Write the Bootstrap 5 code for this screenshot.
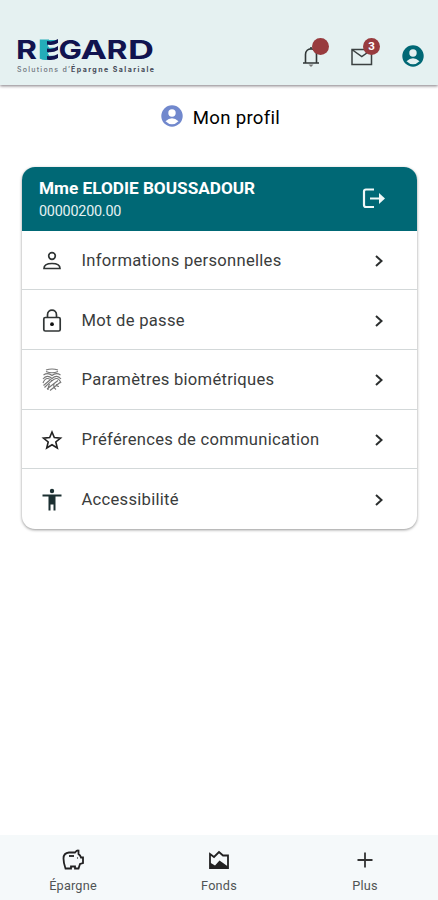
<!DOCTYPE html>
<html lang="fr">
<head>
<meta charset="utf-8">
<meta name="viewport" content="width=device-width, initial-scale=1">
<title>Mon profil</title>
<link href="https://cdn.jsdelivr.net/npm/bootstrap@5.3.0/dist/css/bootstrap.min.css" rel="stylesheet">
<style>
body{font-family:Roboto,"Liberation Sans",sans-serif;color:#111;background:#fff;height:900px;overflow:hidden}
svg{display:block;flex:none}
.topbar{height:85px;background:#e5f1f1;box-shadow:0 1px 3px rgba(60,50,60,.65);padding:32px 13px 0 17px}
.brand text{font-family:Inter,sans-serif}
.tools{margin-top:12px;gap:27px}
.count{position:absolute;left:13px;top:-6px;width:17px;height:17px;border-radius:50%;background:#983b3e;color:#fff;font-size:11.5px;font-weight:700;line-height:17px;text-align:center}
.page-title{height:82px;padding-top:19px;gap:9px;padding-left:2px}
.page-title h1{font-size:18.6px;line-height:27px;padding-top:1px;letter-spacing:.3px;font-weight:400;color:#000}
.profile{margin:0 21px 0 22px;border:0;border-radius:13px;overflow:hidden;box-shadow:0 1px 3px rgba(0,0,0,.42)}
.profile-head{height:63.5px;background:#006875;color:#fff;padding:10px 30px 0 17px}
.holder{font-size:17.2px;line-height:22px;font-weight:700}
.account{font-size:14.4px;line-height:20px;letter-spacing:-.23px;padding-top:3px;color:#e5f1f2}
.entry{height:59.7px;padding:2px 29px 0 17px;border-bottom:1.5px solid #d3d8d9;color:#3a3c3c;font-size:16.6px;text-decoration:none}
.entry:last-child{border-bottom:0}
.entry span{margin-left:16.5px;padding-top:1px;letter-spacing:.27px}
.bottombar{height:65px;background:#f5f9fa;padding-top:13px}
.bottombar a{color:#505454;text-decoration:none;font-size:12.7px;line-height:16px;letter-spacing:.2px;gap:6px}
</style>
</head>
<body class="d-flex flex-column">
<header class="topbar d-flex justify-content-between flex-shrink-0">
  <svg class="brand" width="140" height="44" viewBox="0 0 140 44" aria-label="REGARD">
    <g font-size="26" font-weight="700" fill="#11134f">
      <text x="-1" y="26.500" textLength="21" lengthAdjust="spacingAndGlyphs">R</text>
      <text x="21" y="26.500" textLength="20" lengthAdjust="spacingAndGlyphs" fill="#24adb9">E</text>
      <text x="41.500" y="26.500" textLength="23.500" lengthAdjust="spacingAndGlyphs">G</text>
      <text x="63.500" y="26.500" textLength="26.500" lengthAdjust="spacingAndGlyphs">A</text>
      <text x="89.500" y="26.500" textLength="21" lengthAdjust="spacingAndGlyphs">R</text>
      <text x="111" y="26.500" textLength="26" lengthAdjust="spacingAndGlyphs">D</text>
    </g>
    <path d="M22.800 7.600H32V27.500Q27 29 22.800 26.500Z" fill="#24adb9"/>
    <path d="M30 9Q36 10.500 41 7V11Q36 14 30 12.500ZM30 16.500Q36 18 41 14V18Q36 21 30 20ZM30 24Q36 25 41 22V26Q36 29 30 27.500Z" fill="#11134f"/>
    <path d="M31 13.600Q37 15 42 12M31 21.500Q37 23 42 19.500" stroke="#e5f1f1" stroke-width="1.800" fill="none"/>
    <g font-size="7">
      <text x="0" y="39.500" textLength="53" fill="#6d747d" font-weight="500">Solutions d’</text>
      <text x="54" y="39.500" textLength="83" fill="#454a58" font-weight="700">Épargne Salariale</text>
    </g>
  </svg>
  <div class="tools d-flex align-items-start">
    <div class="position-relative">
      <svg width="24" height="24" viewBox="0 0 24 24" fill="none" stroke="#303737" stroke-width="1.600"><path d="M4 19H20M6.500 19V10.500C6.500 3 17.500 3 17.500 10.500V19M12 5V3"/><path d="M9.500 20.500h5l-2.500 2.500z" fill="#777" stroke="none"/></svg>
      <span class="count"></span>
    </div>
    <div class="position-relative">
      <svg width="24" height="24" viewBox="0 0 24 24" fill="none" stroke="#3b4141" stroke-width="1.500"><path d="M2 5.500H21.500V20.500H2ZM2.500 6L11.800 12.500L21 6"/></svg>
      <span class="count">3</span>
    </div>
    <svg width="24" height="24" viewBox="0 0 24 24"><circle cx="12" cy="12" r="10.700" fill="#006875"/><circle cx="12" cy="9" r="3.700" fill="#e5f1f1"/><path d="M5.500 17.200Q12 11.500 18.500 17.200Q12 23.500 5.500 17.200Z" fill="#e5f1f1"/></svg>
  </div>
</header>
<div class="page-title d-flex justify-content-center align-items-start flex-shrink-0">
  <svg width="24" height="24" viewBox="0 0 24 24"><circle cx="12" cy="12" r="10.700" fill="#7188cd"/><circle cx="12" cy="9" r="3.700" fill="#fff"/><path d="M5.500 17.200Q12 11.500 18.500 17.200Q12 23.500 5.500 17.200Z" fill="#fff"/></svg>
  <h1 class="m-0">Mon profil</h1>
</div>
<main class="flex-grow-1">
  <section class="card profile">
    <div class="profile-head d-flex justify-content-between">
      <div><div class="holder">Mme ELODIE BOUSSADOUR</div><div class="account">00000200.00</div></div>
      <svg class="mt-2" width="26" height="26" viewBox="0 0 26 26" fill="none" stroke="#f0f8f8" stroke-width="2.200"><path d="M13 4.500H5Q3 4.500 3 6.500V20Q3 22 5 22H13M9 13.500H22"/><path d="M18 8L24 13.500L18 19Z" fill="#f0f8f8" stroke="none"/></svg>
    </div>
    <a class="entry d-flex align-items-center" href="#">
      <svg width="26" height="26" viewBox="0 0 26 26" fill="none" stroke="#303535" stroke-width="1.700"><circle cx="13" cy="8" r="3.300"/><path d="M5 20.500Q5 15.500 13 15.500T21 20.500Z"/></svg>
      <span>Informations personnelles</span>
      <svg class="ms-auto" width="18" height="18" viewBox="0 0 18 18"><path d="M6 4L11.500 9L6 14" fill="none" stroke="#2b2e2e" stroke-width="2"/></svg>
    </a>
    <a class="entry d-flex align-items-center" href="#">
      <svg width="26" height="26" viewBox="0 0 26 26" fill="none" stroke="#303535" stroke-width="1.700"><rect x="4.800" y="9.500" width="16.400" height="13.500" rx="1.500"/><path d="M8.500 9.500V7C8.500 .5 17.500 .5 17.500 7V9.500"/><circle cx="13" cy="16.200" r="1.900" fill="#111" stroke="none"/></svg>
      <span>Mot de passe</span>
      <svg class="ms-auto" width="18" height="18" viewBox="0 0 18 18"><path d="M6 4L11.500 9L6 14" fill="none" stroke="#2b2e2e" stroke-width="2"/></svg>
    </a>
    <a class="entry d-flex align-items-center" href="#">
      <svg width="26" height="26" viewBox="0 0 26 26" fill="none" stroke="#777" stroke-width="1.150"><path d="M7 3Q13 1 19 3M7 4.500Q13 7 19 4.500M4.500 8Q9 5 13 8.500Q17 5 21.500 8M4 12Q8 7 13 11.500Q18 7 22 12M4 16Q6 11 9 11.500Q12 12 13 14M22 16Q20 11 17 11.500Q14 12 5.500 20.500M4.500 18.500L11 13M8 22L19 13.500M11 23.500L21 15.500M10.500 17Q9 20 9 23M15 17Q14 20 17 22.500M17.500 17Q17 19.500 20 19.500"/></svg>
      <span>Paramètres biométriques</span>
      <svg class="ms-auto" width="18" height="18" viewBox="0 0 18 18"><path d="M6 4L11.500 9L6 14" fill="none" stroke="#2b2e2e" stroke-width="2"/></svg>
    </a>
    <a class="entry d-flex align-items-center" href="#">
      <svg width="26" height="26" viewBox="0 0 26 26" fill="none" stroke="#222" stroke-width="1.600"><path d="M13 5L15.300 10.600L21.500 11.100L16.800 15L18.300 21L13 17.800L7.700 21L9.200 15L4.500 11.100L10.700 10.600Z"/></svg>
      <span>Préférences de communication</span>
      <svg class="ms-auto" width="18" height="18" viewBox="0 0 18 18"><path d="M6 4L11.500 9L6 14" fill="none" stroke="#2b2e2e" stroke-width="2"/></svg>
    </a>
    <a class="entry d-flex align-items-center" href="#">
      <svg width="26" height="26" viewBox="0 0 26 26" fill="#1c3032"><circle cx="13" cy="4" r="2.200"/><path d="M3.500 7.500H22.500V9.500H16.500V23.500H14.500V17.500H11.500V23.500H9.500V9.500H3.500Z"/></svg>
      <span>Accessibilité</span>
      <svg class="ms-auto" width="18" height="18" viewBox="0 0 18 18"><path d="M6 4L11.500 9L6 14" fill="none" stroke="#2b2e2e" stroke-width="2"/></svg>
    </a>
  </section>
</main>
<nav class="bottombar flex-shrink-0">
  <div class="row g-0">
    <a class="col d-flex flex-column align-items-center" href="#">
      <svg width="24" height="24" viewBox="0 0 24 24" fill="none" stroke="#222" stroke-width="1.800"><path d="M4.500 20.500Q2.500 15 2.500 10.500Q2.500 5 8 4.500H14Q16 2 17.500 2.500V6Q19.500 7.500 20 9.500H22V15L19 16L17.500 20.500H14V18.500H10V20.500Z"/><path d="M8 8H13"/><circle cx="16.500" cy="10" r=".3" stroke-width="1"/></svg>
      <span>Épargne</span>
    </a>
    <a class="col d-flex flex-column align-items-center" href="#">
      <svg width="24" height="24" viewBox="0 0 24 24" fill="none" stroke="#222" stroke-width="1.800"><path d="M3 6L7 9L12 4L16 7.500H21V20H3Z"/><path d="M3 14.500L8 17.500L12.500 12.500L21 18.500V20H3Z" fill="#222" stroke="none"/></svg>
      <span>Fonds</span>
    </a>
    <a class="col d-flex flex-column align-items-center" href="#">
      <svg width="24" height="24" viewBox="0 0 24 24" stroke="#333" stroke-width="1.800"><path d="M4.500 12H19.500M12 4.500V19.500"/></svg>
      <span>Plus</span>
    </a>
  </div>
</nav>
<script src="https://cdn.jsdelivr.net/npm/bootstrap@5.3.0/dist/js/bootstrap.bundle.min.js"></script>
</body>
</html>
